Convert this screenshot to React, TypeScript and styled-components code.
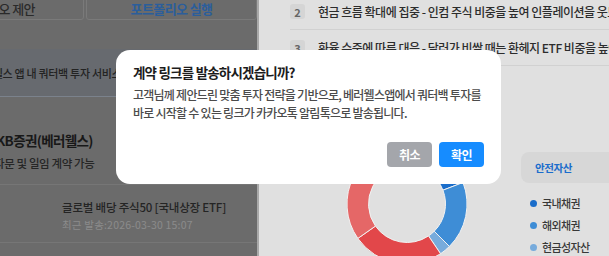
import styled, { createGlobalStyle } from 'styled-components';

const GlobalStyle = createGlobalStyle`
  html, body {
    margin: 0;
    padding: 0;
  }
  body {
    width: 609px;
    height: 256px;
    overflow: hidden;
    font-family: "Noto Sans CJK KR", "Noto Sans", sans-serif;
  }
`;

const Screen = styled.div`
  position: relative;
  display: flex;
  width: 609px;
  height: 256px;
  overflow: hidden;
`;

/* ---------- left (dimmed) panel ---------- */

const LeftPanel = styled.section`
  width: 257px;
  flex-shrink: 0;
  overflow: hidden;
  background: #6b6b6b;
`;

const Sheet = styled.div`
  width: 353px;
  margin-left: -96px;
`;

const Tabs = styled.div`
  display: grid;
  grid-template-columns: 1fr 171px;
  gap: 2px;
  margin-top: -4px;
`;

const Tab = styled.div<{ $active?: boolean }>`
  height: 24px;
  box-sizing: border-box;
  border: 1px solid #7a7a7a;
  border-radius: 0 0 3px 3px;
  display: flex;
  align-items: center;
  justify-content: center;
  font-size: 13px;
  letter-spacing: -0.6px;
  font-weight: ${(p) => (p.$active ? 700 : 500)};
  color: ${(p) => (p.$active ? '#2b5e9b' : '#2a2a2a')};
`;

const Notice = styled.div`
  margin-top: 29px;
  height: 47px;
  border-bottom: 1px solid #7b828c;
  background: #676a6f;
  padding-left: 69px;
  display: flex;
  align-items: center;
  font-size: 11px;
  font-weight: 500;
  letter-spacing: -0.3px;
  color: #232323;
  white-space: nowrap;
`;

const BrokerCard = styled.div`
  padding: 33px 0 12px 92px;
  border-bottom: 1px solid #767676;
  display: flex;
  flex-direction: column;
  gap: 4px;
`;

const BrokerName = styled.div`
  font-size: 13.5px;
  line-height: 20px;
  font-weight: 700;
  letter-spacing: -0.65px;
  color: #181818;
`;

const BrokerSub = styled.div`
  margin-left: -2px;
  font-size: 11.5px;
  line-height: 18px;
  font-weight: 500;
  letter-spacing: -0.4px;
  color: #262626;
  white-space: nowrap;
`;

const ProductRow = styled.div`
  padding: 14px 0 10px 158px;
  border-bottom: 1px solid #767676;
  display: flex;
  flex-direction: column;
  gap: 3px;
`;

const ProductName = styled.div`
  font-size: 11.5px;
  line-height: 16px;
  font-weight: 500;
  letter-spacing: -0.2px;
  color: #242424;
  white-space: nowrap;
`;

const SentAt = styled.div`
  font-size: 10.5px;
  line-height: 14px;
  letter-spacing: 0.2px;
  color: #8c8c8c;
  white-space: nowrap;
`;

/* ---------- right panel ---------- */

const RightPanel = styled.section`
  flex: 1;
  min-width: 0;
  overflow: hidden;
  background: #e0e0e0;
  border-left: 2px solid #a9a9a9;
`;

const PointList = styled.div`
  margin: -6px 0 0 31px;
`;

const PointRow = styled.div`
  height: 35px;
  border-bottom: 1px solid #d1d1d1;
  display: flex;
  align-items: center;
  gap: 13px;
  white-space: nowrap;
`;

const PointNo = styled.span`
  width: 15px;
  height: 15px;
  flex-shrink: 0;
  border-radius: 3px;
  background: #d5d5d5;
  display: flex;
  align-items: center;
  justify-content: center;
  font-size: 11px;
  font-weight: 700;
  color: #666;
`;

const PointText = styled.span`
  font-size: 12px;
  font-weight: 500;
  letter-spacing: -0.5px;
  color: #2c2c2c;
`;

const ChartSection = styled.div`
  display: flex;
  align-items: flex-start;
  margin-top: 78px;
  padding-left: 88px;
`;

const Donut = styled.svg`
  flex-shrink: 0;
  display: block;
`;

const Legend = styled.div`
  margin: 8px 0 0 54px;
  display: flex;
  flex-direction: column;
`;

const LegendCard = styled.div`
  width: 110px;
  height: 31px;
  box-sizing: border-box;
  border-radius: 8px;
  background: #d7d7d7;
  padding-left: 14px;
  display: flex;
  align-items: center;
  font-size: 10.5px;
  font-weight: 700;
  letter-spacing: -0.4px;
  color: #1b6dcc;
`;

const LegendList = styled.div`
  margin-top: 9px;
  padding-left: 9px;
`;

const LegendItem = styled.div`
  height: 22px;
  display: flex;
  align-items: center;
  gap: 5px;
  font-size: 11px;
  font-weight: 500;
  letter-spacing: -0.6px;
  color: #383838;
  white-space: nowrap;
`;

const Dot = styled.span<{ $color: string }>`
  width: 7px;
  height: 7px;
  border-radius: 50%;
  background: ${(p) => p.$color};
`;

/* ---------- modal ---------- */

const Modal = styled.div`
  position: absolute;
  left: 116px;
  top: 50px;
  width: 385px;
  height: 134px;
  box-sizing: border-box;
  padding: 13px 17px 17px;
  background: #fff;
  border-radius: 14px;
  display: flex;
  flex-direction: column;
`;

const ModalTitle = styled.div`
  font-size: 13.5px;
  line-height: 18px;
  font-weight: 700;
  letter-spacing: -0.8px;
  color: #1c1c1c;
`;

const ModalBody = styled.p`
  margin: 5px 0 0;
  font-size: 12px;
  line-height: 18px;
  font-weight: 500;
  letter-spacing: -0.75px;
  color: #4b4b4b;
`;

const Actions = styled.div`
  margin-top: auto;
  display: flex;
  justify-content: flex-end;
  gap: 7px;
`;

const Button = styled.button<{ $tone: 'cancel' | 'confirm' }>`
  width: 45px;
  height: 25px;
  padding: 0;
  border: none;
  border-radius: 4px;
  font-family: inherit;
  font-size: 12px;
  font-weight: 700;
  letter-spacing: -0.6px;
  color: #fff;
  background: ${(p) => (p.$tone === 'confirm' ? '#168cff' : '#a4a6ab')};
`;

const segments = [
  { from: 0, to: 69, color: '#1a6dca' },
  { from: 69, to: 135, color: '#3e8dd6' },
  { from: 135, to: 146, color: '#77abdc' },
  { from: 146, to: 235, color: '#e2474a' },
  { from: 235, to: 360, color: '#e56767' },
];

const legend = [
  { label: '국내채권', color: '#1a6dca' },
  { label: '해외채권', color: '#3e8dd6' },
  { label: '현금성자산', color: '#77abdc' },
];

const pt = (r: number, a: number) => {
  const rad = (a * Math.PI) / 180;
  return `${60 + r * Math.sin(rad)} ${60 - r * Math.cos(rad)}`;
};

const arc = (r0: number, r1: number, a0: number, a1: number) => {
  const large = a1 - a0 > 180 ? 1 : 0;
  return `M ${pt(r1, a0)} A ${r1} ${r1} 0 ${large} 1 ${pt(r1, a1)} L ${pt(r0, a1)} A ${r0} ${r0} 0 ${large} 0 ${pt(r0, a0)} Z`;
};

export default function App() {
  return (
    <>
      <GlobalStyle />
      <Screen>
        <LeftPanel>
          <Sheet>
            <Tabs>
              <Tab>포트폴리오 제안</Tab>
              <Tab $active>포트폴리오 실행</Tab>
            </Tabs>
            <Notice>베러웰스 앱 내 쿼터백 투자 서비스를 통해 계약이 진행됩니다.</Notice>
            <BrokerCard>
              <BrokerName>KB증권(베러웰스)</BrokerName>
              <BrokerSub>자문 및 일임 계약 가능</BrokerSub>
            </BrokerCard>
            <ProductRow>
              <ProductName>글로벌 배당 주식50 [국내상장 ETF]</ProductName>
              <SentAt>최근 발송:2026-03-30 15:07</SentAt>
            </ProductRow>
          </Sheet>
        </LeftPanel>

        <RightPanel>
          <PointList>
            <PointRow>
              <PointNo>2</PointNo>
              <PointText>현금 흐름 확대에 집중 - 인컴 주식 비중을 높여 인플레이션을 웃도는 수익을 추구합니다.</PointText>
            </PointRow>
            <PointRow>
              <PointNo>3</PointNo>
              <PointText>환율 수준에 따른 대응 - 달러가 비쌀 때는 환헤지 ETF 비중을 높여 환율 하락에 대비합니다.</PointText>
            </PointRow>
          </PointList>
          <ChartSection>
            <Donut width={120} height={120} viewBox="0 0 120 120">
              {segments.map((s) => (
                <path key={s.from} d={arc(38.5, 60, s.from, s.to)} fill={s.color} stroke="#f2f2f2" strokeWidth={1} />
              ))}
            </Donut>
            <Legend>
              <LegendCard>안전자산</LegendCard>
              <LegendList>
                {legend.map((l) => (
                  <LegendItem key={l.label}>
                    <Dot $color={l.color} />
                    {l.label}
                  </LegendItem>
                ))}
              </LegendList>
            </Legend>
          </ChartSection>
        </RightPanel>

        <Modal role="dialog">
          <ModalTitle>계약 링크를 발송하시겠습니까?</ModalTitle>
          <ModalBody>
            고객님께 제안드린 맞춤 투자 전략을 기반으로, 베러웰스앱에서 쿼터백 투자를
            <br />
            바로 시작할 수 있는 링크가 카카오톡 알림톡으로 발송됩니다.
          </ModalBody>
          <Actions>
            <Button $tone="cancel">취소</Button>
            <Button $tone="confirm">확인</Button>
          </Actions>
        </Modal>
      </Screen>
    </>
  );
}
